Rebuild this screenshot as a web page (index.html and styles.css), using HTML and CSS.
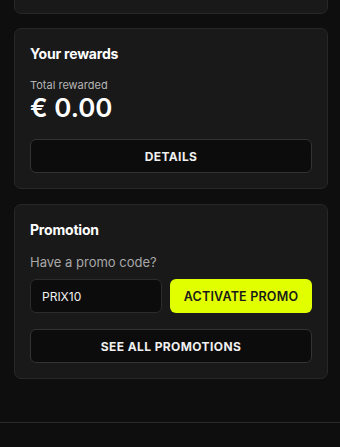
FILE: index.html
```html
<!DOCTYPE html>
<html>
<head>
<meta charset="utf-8">
<link rel="stylesheet" href="styles.css">
</head>
<body>
<div class="page">
  <div class="card card-top"></div>
  <div class="card">
    <div class="card-title">Your rewards</div>
    <div class="label">Total rewarded</div>
    <div class="amount">€ 0.00</div>
    <button class="btn btn-dark btn-details">DETAILS</button>
  </div>
  <div class="card">
    <div class="card-title">Promotion</div>
    <div class="question">Have a promo code?</div>
    <div class="promo-row">
      <div class="input">PRIX10</div>
      <button class="btn btn-yellow">ACTIVATE PROMO</button>
    </div>
    <button class="btn btn-dark btn-all">SEE ALL PROMOTIONS</button>
  </div>
</div>
<div class="footer"></div>
</body>
</html>
```

FILE: styles.css
```css
html, body {
  margin: 0;
  padding: 0;
  background: #0e0e0e;
  font-family: Inter, "Liberation Sans", sans-serif;
  color: #fff;
  height: 100%;
  overflow: hidden;
}
.page {
  padding: 0 12px 0 14px;
  display: flex;
  flex-direction: column;
  gap: 15px;
}
.card {
  background: #191919;
  border: 1px solid #272727;
  border-radius: 7px;
  padding: 15px 15px 15px;
  display: flex;
  flex-direction: column;
}
.card-top {
  margin-top: -40px;
  height: 54px;
  box-sizing: border-box;
  padding: 0;
  margin-bottom: -1px;
}
.card-title {
  font-size: 14px;
  font-weight: 700;
  line-height: 20px;
  letter-spacing: -0.2px;
}
.label {
  margin-top: 14px;
  font-size: 11px;
  line-height: 14px;
  color: #b5b5b5;
}
.amount {
  margin-top: 1px;
  font-size: 26px;
  font-weight: 600;
  line-height: 30px;
}
.btn {
  font-family: Inter, "Liberation Sans", sans-serif;
  font-size: 12px;
  font-weight: 700;
  height: 34px;
  border-radius: 6px;
  display: flex;
  align-items: center;
  justify-content: center;
  letter-spacing: 0.4px;
  padding: 0;
}
.btn-dark {
  background: #0c0c0c;
  border: 1px solid #333;
  color: #f0f0f0;
  width: 100%;
}
.btn-details {
  margin-top: 16px;
}
.question {
  margin-top: 13px;
  font-size: 13px;
  line-height: 18px;
  color: #a8a8a8;
}
.promo-row {
  margin-top: 8px;
  display: flex;
  gap: 8px;
}
.input {
  flex: 0 0 132px;
  box-sizing: border-box;
  height: 34px;
  background: #0c0c0c;
  border: 1px solid #2c2c2c;
  border-radius: 6px;
  display: flex;
  align-items: center;
  padding-left: 11px;
  font-size: 12px;
  color: #f0f0f0;
}
.btn-yellow {
  flex: 1;
  background: #e2ff00;
  border: none;
  color: #1a1a1a;
  font-weight: 600;
  font-size: 12.5px;
  letter-spacing: 0.2px;
}
.btn-all {
  margin-top: 16px;
}
.footer {
  margin-top: 43px;
  border-top: 1px solid #2a2a2a;
  height: 40px;
}
```
